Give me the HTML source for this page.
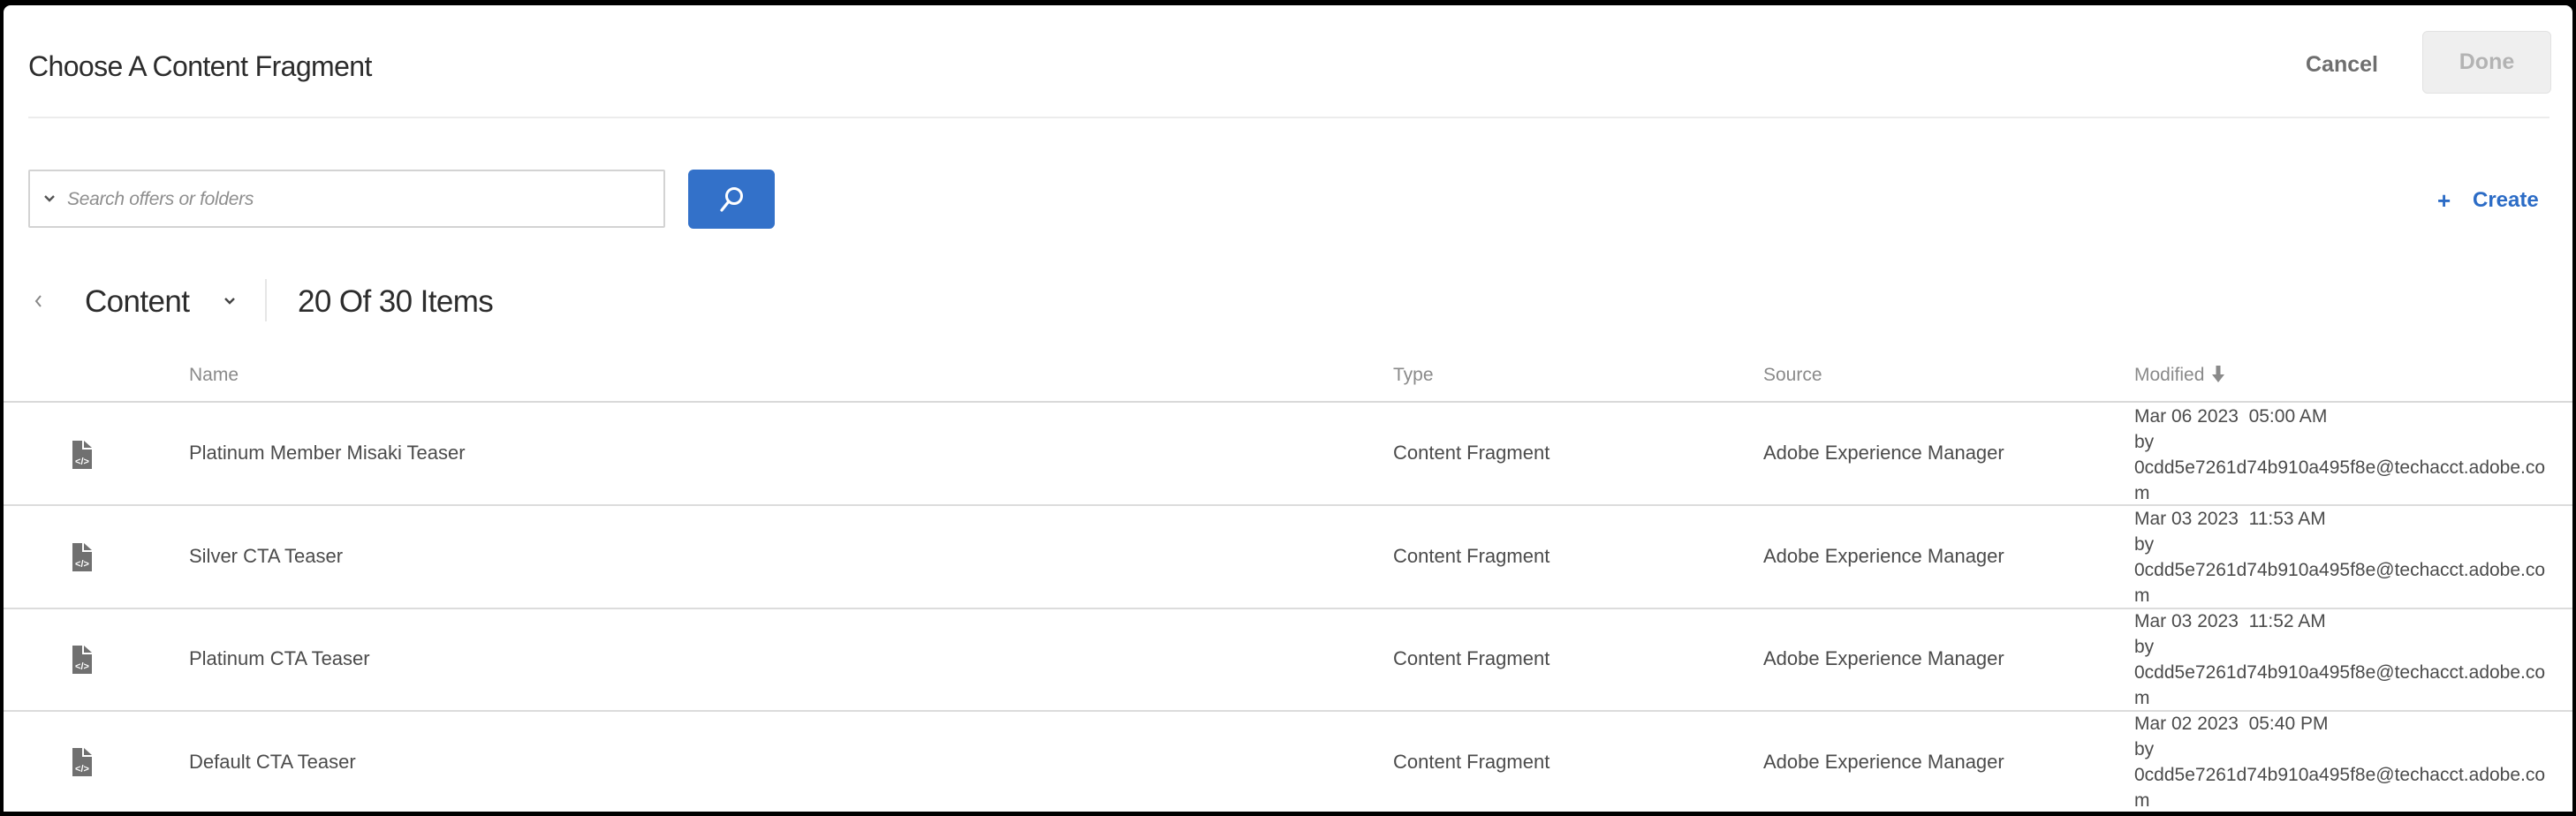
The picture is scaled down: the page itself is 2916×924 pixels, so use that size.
<!DOCTYPE html>
<html><head><meta charset="utf-8"><style>
*{margin:0;padding:0;box-sizing:border-box}
body{width:2916px;height:924px;background:#000;position:relative;overflow:hidden;font-family:"Liberation Sans",sans-serif}
.panel{position:absolute;left:4px;top:6px;width:2908px;height:913px;background:#fff;border-radius:8px 8px 0 0;overflow:hidden}
.a{position:absolute;white-space:nowrap}
.hline{position:absolute;height:2px}
.row .name,.row .type,.row .src{position:absolute;font-size:22px;color:#4b4b4b;transform:translateY(-50%)}
.mod{position:absolute;font-size:21px;line-height:29px;color:#4b4b4b;white-space:nowrap}
.hdr{position:absolute;top:407px;font-size:21px;color:#8a8a8a}
</style></head><body>
<div class="panel">
<div class="a" style="left:28px;top:51px;font-size:32px;color:#2c2c2c;letter-spacing:-0.6px">Choose A Content Fragment</div>
<div class="a" style="left:2606px;top:53px;font-size:25px;font-weight:bold;color:#6e6e6e">Cancel</div>
<div class="a" style="left:2738px;top:29px;width:146px;height:71px;background:#efefef;border:1px solid #e2e2e2;border-radius:6px;color:#b3b3b3;font-size:25px;font-weight:bold;text-align:center;line-height:69px">Done</div>
<div class="hline" style="left:28px;top:126px;width:2854px;background:#ececec"></div>

<div class="a" style="left:28px;top:186px;width:721px;height:66px;border:2px solid #d3d3d3;border-radius:2px"></div>
<svg class="a" style="left:44px;top:213px" width="16" height="12" viewBox="0 0 16 12"><path d="M3 3 L8 8 L13 3" stroke="#555" stroke-width="2.4" fill="none"/></svg>
<div class="a" style="left:72px;top:208px;font-size:21px;font-style:italic;color:#8e8e8e;letter-spacing:-0.3px">Search offers or folders</div>
<div class="a" style="left:775px;top:186px;width:98px;height:67px;background:#3371c9;border-radius:6px"></div>
<svg class="a" style="left:808px;top:203px" width="32" height="34" viewBox="0 0 32 34"><circle cx="19" cy="13" r="8.5" stroke="#fff" stroke-width="3" fill="none"/><path d="M13 19 L5 29" stroke="#fff" stroke-width="3.2" stroke-linecap="round"/></svg>

<div class="a" style="left:2755px;top:206px;font-size:26px;color:#2c6cc6;font-weight:bold">+</div>
<div class="a" style="left:2795px;top:207px;font-size:24px;color:#2c6cc6;font-weight:bold">Create</div>

<svg class="a" style="left:32px;top:325px" width="14" height="20" viewBox="0 0 14 20"><path d="M10 4 L5 10 L10 16" stroke="#888" stroke-width="2" fill="none"/></svg>
<div class="a" style="left:92px;top:316px;font-size:35px;color:#2c2c2c;letter-spacing:-0.6px">Content</div>
<svg class="a" style="left:248px;top:329px" width="16" height="12" viewBox="0 0 16 12"><path d="M3 3 L8 8 L13 3" stroke="#444" stroke-width="2.4" fill="none"/></svg>
<div class="a" style="left:296px;top:310px;width:2px;height:48px;background:#e6e6e6"></div>
<div class="a" style="left:333px;top:316px;font-size:35px;color:#2c2c2c;letter-spacing:-0.6px">20 Of 30 Items</div>

<div class="hdr" style="left:210px">Name</div>
<div class="hdr" style="left:1573px">Type</div>
<div class="hdr" style="left:1992px">Source</div>
<div class="hdr" style="left:2412px">Modified</div>
<svg class="a" style="left:2499px;top:407px" width="16" height="22" viewBox="0 0 16 22"><rect x="5.5" y="1" width="5" height="11" fill="#8a8a8a"/><path d="M1 11 L15 11 L8 20 Z" fill="#8a8a8a"/></svg>
<div class="hline" style="left:0;top:448px;width:2908px;background:#d9d9d9"></div>

<div class="row">
<svg class="a" style="left:78px;top:493px" width="22" height="32" viewBox="0 0 22 32"><path d="M0 0 H11 L11 10 L22 10 V32 H0 Z M13 0 L22 8 H13 Z" fill="#707070"/><text x="11" y="27" font-size="11" font-family="Liberation Sans" font-weight="bold" fill="#fff" text-anchor="middle">&lt;/&gt;</text></svg>
<div class="name" style="left:210px;top:507px">Platinum Member Misaki Teaser</div>
<div class="type" style="left:1573px;top:507px">Content Fragment</div>
<div class="src" style="left:1992px;top:507px">Adobe Experience Manager</div>
<div class="mod" style="left:2412px;top:451px">Mar 06 2023&nbsp; 05:00 AM<br>by<br>0cdd5e7261d74b910a495f8e@techacct.adobe.co<br>m</div>
</div>
<div class="hline" style="left:0;top:565px;width:2908px;background:#dcdcdc"></div>

<div class="row">
<svg class="a" style="left:78px;top:609px" width="22" height="32" viewBox="0 0 22 32"><path d="M0 0 H11 L11 10 L22 10 V32 H0 Z M13 0 L22 8 H13 Z" fill="#707070"/><text x="11" y="27" font-size="11" font-family="Liberation Sans" font-weight="bold" fill="#fff" text-anchor="middle">&lt;/&gt;</text></svg>
<div class="name" style="left:210px;top:624px">Silver CTA Teaser</div>
<div class="type" style="left:1573px;top:624px">Content Fragment</div>
<div class="src" style="left:1992px;top:624px">Adobe Experience Manager</div>
<div class="mod" style="left:2412px;top:567px">Mar 03 2023&nbsp; 11:53 AM<br>by<br>0cdd5e7261d74b910a495f8e@techacct.adobe.co<br>m</div>
</div>
<div class="hline" style="left:0;top:682px;width:2908px;background:#dcdcdc"></div>

<div class="row">
<svg class="a" style="left:78px;top:725px" width="22" height="32" viewBox="0 0 22 32"><path d="M0 0 H11 L11 10 L22 10 V32 H0 Z M13 0 L22 8 H13 Z" fill="#707070"/><text x="11" y="27" font-size="11" font-family="Liberation Sans" font-weight="bold" fill="#fff" text-anchor="middle">&lt;/&gt;</text></svg>
<div class="name" style="left:210px;top:740px">Platinum CTA Teaser</div>
<div class="type" style="left:1573px;top:740px">Content Fragment</div>
<div class="src" style="left:1992px;top:740px">Adobe Experience Manager</div>
<div class="mod" style="left:2412px;top:683px">Mar 03 2023&nbsp; 11:52 AM<br>by<br>0cdd5e7261d74b910a495f8e@techacct.adobe.co<br>m</div>
</div>
<div class="hline" style="left:0;top:798px;width:2908px;background:#dcdcdc"></div>

<div class="row">
<svg class="a" style="left:78px;top:841px" width="22" height="32" viewBox="0 0 22 32"><path d="M0 0 H11 L11 10 L22 10 V32 H0 Z M13 0 L22 8 H13 Z" fill="#707070"/><text x="11" y="27" font-size="11" font-family="Liberation Sans" font-weight="bold" fill="#fff" text-anchor="middle">&lt;/&gt;</text></svg>
<div class="name" style="left:210px;top:857px">Default CTA Teaser</div>
<div class="type" style="left:1573px;top:857px">Content Fragment</div>
<div class="src" style="left:1992px;top:857px">Adobe Experience Manager</div>
<div class="mod" style="left:2412px;top:799px">Mar 02 2023&nbsp; 05:40 PM<br>by<br>0cdd5e7261d74b910a495f8e@techacct.adobe.co<br>m</div>
</div>
</div>
</body></html>
